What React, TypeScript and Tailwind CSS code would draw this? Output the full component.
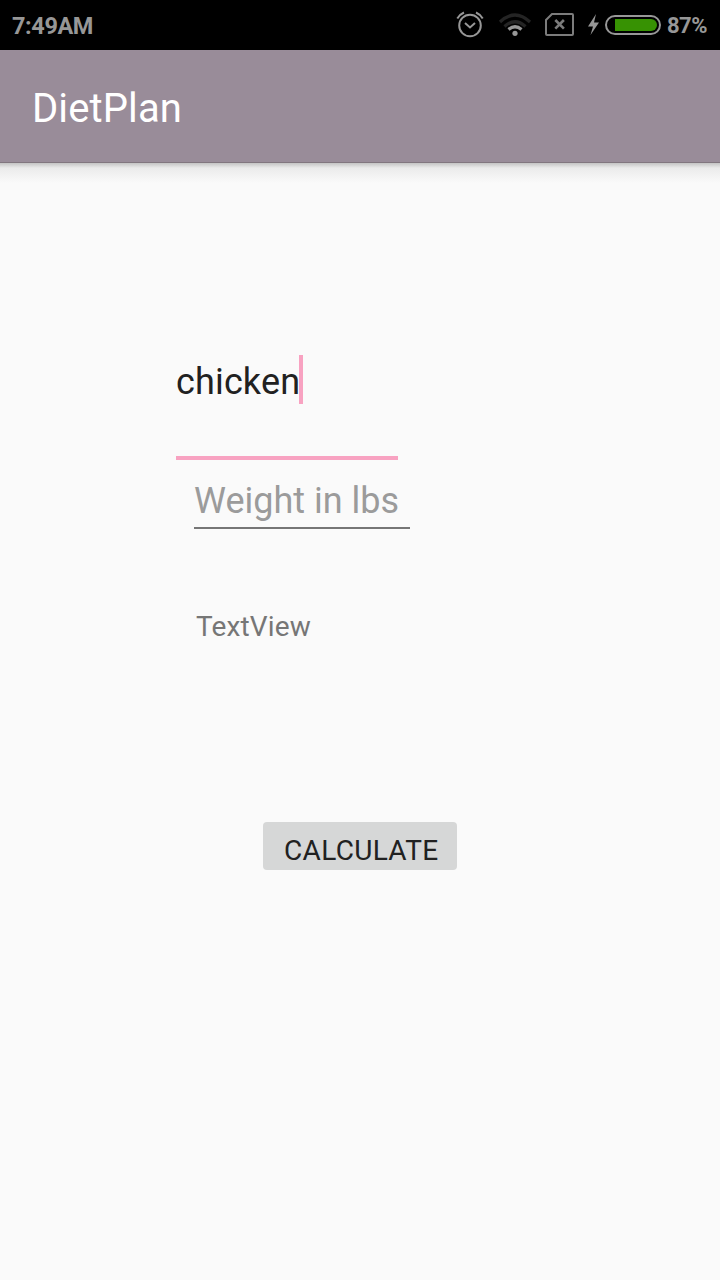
function AlarmIcon() {
  return (
    <svg width="30" height="30" viewBox="0 0 30 30" fill="none" stroke="#979797" strokeWidth="2">
      <circle cx="15" cy="15.500" r="10.800" />
      <path d="M10 13l5 4.500 5-4.500" />
      <path d="M2.300 8.500Q4.500 4.500 9 2.500M27.700 8.500Q25.500 4.500 21 2.500" />
    </svg>
  );
}

function WifiIcon() {
  return (
    <svg width="34" height="26" viewBox="0 0 34 26" fill="none" strokeWidth="3.2">
      <path d="M2 10Q17 -4 32 10" stroke="#242424" />
      <path d="M6.500 14.500Q17 5 27.500 14.500" stroke="#242424" />
      <path d="M10.500 17.500Q17 12 23.500 17.500" stroke="#979797" />
      <circle cx="17" cy="21.300" r="2.600" fill="#979797" />
    </svg>
  );
}

function NoSimIcon() {
  return (
    <svg width="30" height="24" viewBox="0 0 30 24" fill="none" stroke="#7c7c7c" strokeWidth="2">
      <path d="M7 1h20q1 0 1 1v19q0 1-1 1H2q-1 0-1-1V7z" />
      <path d="M10.300 7l8.600 8.600M18.900 7l-8.600 8.600" strokeWidth="2.600" />
    </svg>
  );
}

function BatteryIcon() {
  return (
    <svg width="73" height="22" viewBox="0 0 73 22">
      <path d="M8 0L0 12.500h5L2.500 21 11 8.500H6z" fill="#979797" />
      <rect x="18" y="2" width="54" height="18" rx="9" fill="none" stroke="#979797" strokeWidth="2" />
      <path d="M27 5h36a6 6 0 0 1 0 12H27z" fill="#379203" />
    </svg>
  );
}

function StatusBar() {
  return (
    <div className="flex h-[50px] shrink-0 items-start bg-black text-[#979797]">
      <span className="mt-[13px] ml-3 text-[23.5px] leading-[26px] font-bold tracking-[-0.4px]">7:49AM</span>
      <div className="mt-[10px] ml-auto"><AlarmIcon /></div>
      <div className="mt-3 ml-[13px]"><WifiIcon /></div>
      <div className="mt-[13px] ml-[13px]"><NoSimIcon /></div>
      <div className="mt-[14px] ml-[13px]"><BatteryIcon /></div>
      <span className="mt-[13px] mr-[13px] ml-[6px] w-10 text-[22px] leading-[26px] font-bold tracking-[-0.5px] whitespace-nowrap">87%</span>
    </div>
  );
}

export default function App() {
  return (
    <div className="flex h-[1280px] w-[720px] flex-col overflow-hidden bg-[#fafafa] font-[Roboto,sans-serif]">
      <StatusBar />
      <header className="flex h-[113px] shrink-0 items-center border-b border-[#81767f] bg-[#998c99] pt-[5px] pl-8">
        <h1 className="text-[40px] leading-[49px] tracking-[0.12px] text-white">DietPlan</h1>
      </header>
      <div className="h-5 shrink-0 bg-linear-to-b from-[#c4c4c4] via-[#ebebeb] via-25% to-[#fafafa]" />
      <main className="flex flex-col items-start">
        <div className="mt-[172px] ml-[176px] flex h-[105px] w-[222px] items-start border-b-4 border-[#f8a2c1]">
          <span className="w-[123px] pt-[6px] text-[36px] leading-[42px] tracking-[0.15px] text-[#212121]">chicken</span>
          <span className="h-[49px] w-1 bg-[#f8a2c1]" />
        </div>
        <div className="ml-[194px] h-[69px] w-[216px] border-b-2 border-[#767676] pt-[20px]">
          <span className="block text-[36px] leading-[42px] whitespace-nowrap text-[#9b9b9b]">Weight in lbs</span>
        </div>
        <p className="mt-[81px] ml-[196px] text-[28px] leading-[34px] tracking-[0.15px] text-[#767676]">TextView</p>
        <button className="mt-[178px] ml-[263px] h-12 w-[194px] rounded-[4px] bg-[#d6d7d7] pt-[10px] pl-[21px] text-left text-[28px] leading-[38px] tracking-[0.32px] text-[#212121]">CALCULATE</button>
      </main>
    </div>
  );
}
